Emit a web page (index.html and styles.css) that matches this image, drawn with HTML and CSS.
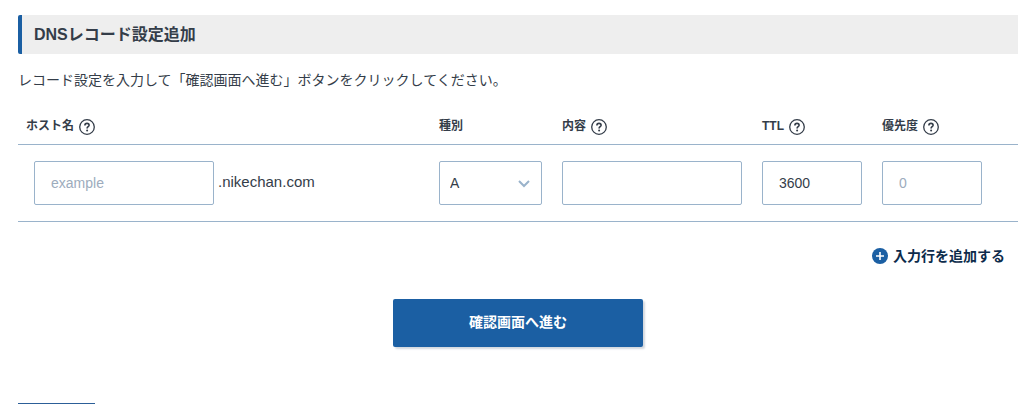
FILE: index.html
```
<!DOCTYPE html>
<html lang="ja">
<head>
  <meta charset="UTF-8">
  <meta name="viewport" content="width=device-width, initial-scale=1.0">
  <title>DNSレコード設定追加</title>
  <link rel="stylesheet" href="styles.css">
</head>
<body>
  <svg width="0" height="0" class="sprite">
    <symbol id="help" viewBox="0 0 16 16">
      <circle cx="8" cy="8" r="7.3" fill="none" stroke="currentColor" stroke-width="1.3"/>
      <path d="M5.9 6.4C5.9 5.1 6.8 4.4 8 4.4s2.1.7 2.1 1.8c0 1.5-2 1.5-2 3.2" fill="none" stroke="currentColor" stroke-width="1.6"/>
      <circle cx="8.1" cy="11.4" r="1" fill="currentColor"/>
    </symbol>
  </svg>

  <main>
    <h1>DNSレコード設定追加</h1>
    <p class="lead">レコード設定を入力して「確認画面へ進む」ボタンをクリックしてください。</p>

    <form onsubmit="return false;">
      <table class="records">
        <thead>
          <tr>
            <th class="col-host"><label for="host">ホスト名</label> <svg class="help"><use href="#help"/></svg></th>
            <th class="col-type"><label for="type">種別</label></th>
            <th class="col-value"><label for="value">内容</label> <svg class="help"><use href="#help"/></svg></th>
            <th class="col-ttl"><label for="ttl">TTL</label> <svg class="help"><use href="#help"/></svg></th>
            <th class="col-priority"><label for="priority">優先度</label> <svg class="help"><use href="#help"/></svg></th>
          </tr>
        </thead>
        <tbody>
          <tr>
            <td>
              <div class="host">
                <input type="text" id="host" name="host" placeholder="example">
                <span class="domain">.nikechan.com</span>
              </div>
            </td>
            <td>
              <div class="select">
                <select id="type" name="type">
                  <option>A</option>
                </select>
                <svg class="arrow" viewBox="0 0 12 8"><path d="M1 1l5 5 5-5" fill="none" stroke="currentColor" stroke-width="2"/></svg>
              </div>
            </td>
            <td><input type="text" id="value" name="value"></td>
            <td><input type="text" id="ttl" name="ttl" value="3600"></td>
            <td><input type="text" id="priority" name="priority" placeholder="0"></td>
          </tr>
        </tbody>
      </table>

      <div class="add">
        <a href="#">
          <svg viewBox="0 0 16 16"><circle cx="8" cy="8" r="8" fill="#1b5fa3"/><path d="M8 4v8M4 8h8" stroke="#fff" stroke-width="1.6"/></svg>
          入力行を追加する
        </a>
      </div>

      <button type="submit" class="submit">確認画面へ進む</button>
    </form>

    <div class="next-line"></div>
  </main>
</body>
</html>
```
FILE: styles.css
```
* {
  box-sizing: border-box;
}

body {
  margin: 0;
  color: #343d49;
  background-color: #fff;
  font-family: "Liberation Sans", "Noto Sans CJK JP", sans-serif;
  font-size: 14px;
  line-height: 20px;
}

main {
  padding: 15px 13px 0 18px;
}

.sprite {
  position: absolute;
}

h1 {
  margin: 0;
  padding: 8px 12px 7px;
  border-left: 4px solid #1b5fa3;
  border-radius: 2px 0 0 2px;
  background-color: #eee;
  font-size: 16px;
  line-height: 24px;
}

.lead {
  margin: 16px 0;
}

.records {
  width: 100%;
  border-collapse: collapse;
  table-layout: fixed;
}

.records tr {
  border-bottom: 1px solid #9ab3cb;
}

.records th {
  height: 38px;
  padding: 2px 10px 0;
  font-size: 12px;
  text-align: left;
  white-space: nowrap;
}

.records th.col-host {
  padding-left: 8px;
}

.col-type {
  width: 123px;
}

.col-value {
  width: 200px;
}

.col-ttl {
  width: 120px;
}

.col-priority {
  width: 146px;
}

.records td {
  padding: 16px 10px;
}

.records td:first-child {
  padding-left: 16px;
}

.help {
  width: 16px;
  height: 16px;
  margin-left: 2px;
  vertical-align: middle;
}

input, select {
  display: block;
  width: 100%;
  height: 44px;
  margin: 0;
  padding: 0 16px;
  border: 1px solid #9ab3cb;
  border-radius: 2px;
  background-color: #fff;
  color: #343d49;
  font-family: inherit;
  font-size: 14px;
}

input::placeholder {
  color: #9dacbd;
  opacity: 1;
}

select {
  appearance: none;
  padding: 0 10px;
}

#host {
  width: 180px;
}

#priority {
  width: 100px;
}

.host {
  display: flex;
  align-items: center;
  gap: 4px;
}

.domain {
  padding-bottom: 2px;
  font-size: 15px;
}

.select {
  position: relative;
}

.arrow {
  position: absolute;
  top: 19px;
  right: 12px;
  width: 12px;
  height: 8px;
  color: #9ab3cb;
  pointer-events: none;
}

.add {
  display: flex;
  justify-content: flex-end;
  padding: 24px 13px 0 0;
}

.add a {
  display: flex;
  align-items: center;
  gap: 5px;
  color: #0d2b4b;
  font-weight: bold;
  text-decoration: none;
}

.add svg {
  width: 16px;
  height: 16px;
}

.submit {
  display: block;
  width: 250px;
  height: 48px;
  margin: 33px auto 56px;
  padding: 0 0 3px;
  border: none;
  border-radius: 2px;
  background-color: #1b5fa3;
  box-shadow: 2px 2px 2px #d3d8df;
  color: #fff;
  font-family: inherit;
  font-size: 14px;
  font-weight: bold;
  cursor: pointer;
}

.next-line {
  width: 77px;
  height: 1px;
  background-color: #2c5f98;
}
```
